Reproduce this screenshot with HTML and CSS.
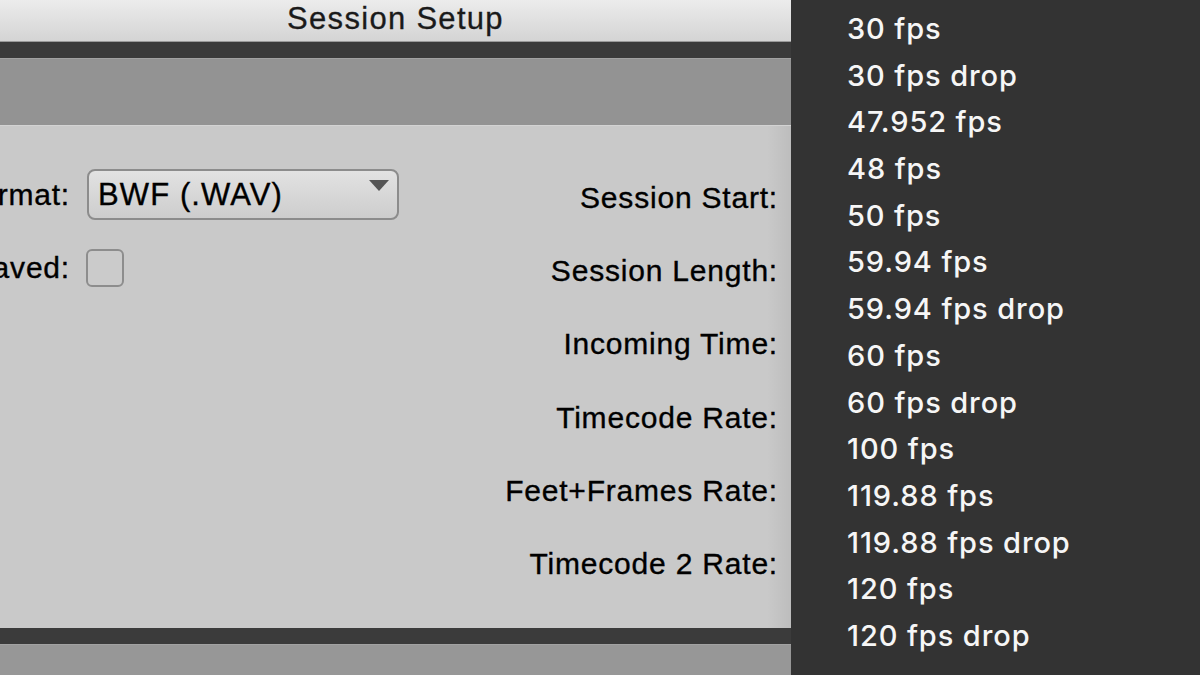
FILE: index.html
```html
<!DOCTYPE html>
<html lang="en">
<head>
<meta charset="UTF-8">
<meta name="viewport" content="width=device-width, initial-scale=1.0">
<title>Session Setup</title>
<link rel="stylesheet" href="styles.css">
</head>
<body>

<div class="screen">
  <!-- ダイアログ本体 -->
  <div class="window">
    <div class="titlebar">Session Setup</div>
    <div class="stripe"></div>
    <div class="band"></div>

    <div class="panel">
      <!-- 左側：フォーマット -->
      <div class="col-left">
        <div class="row">
          <span class="label">Audio File Format:</span>
          <div class="select">
            <span>BWF (.WAV)</span>
            <span class="arrow"></span>
          </div>
        </div>
        <div class="row">
          <span class="label">Interleaved:</span>
          <span class="checkbox"></span>
        </div>
      </div>

      <!-- 右側：タイムコード -->
      <div class="col-right">
        <div class="row">Session Start:</div>
        <div class="row">Session Length:</div>
        <div class="row">Incoming Time:</div>
        <div class="row">Timecode Rate:</div>
        <div class="row">Feet+Frames Rate:</div>
        <div class="row">Timecode 2 Rate:</div>
      </div>
    </div>

    <div class="stripe"></div>
    <div class="band band-bottom"></div>
  </div>

  <!-- ポップアップメニュー -->
  <ul class="menu">
    <li>30 fps</li>
    <li>30 fps drop</li>
    <li>47.952 fps</li>
    <li>48 fps</li>
    <li>50 fps</li>
    <li>59.94 fps</li>
    <li>59.94 fps drop</li>
    <li>60 fps</li>
    <li>60 fps drop</li>
    <li>100 fps</li>
    <li>119.88 fps</li>
    <li>119.88 fps drop</li>
    <li>120 fps</li>
    <li>120 fps drop</li>
  </ul>
</div>

</body>
</html>
```

FILE: styles.css
```css
html, body {
  margin: 0;
  padding: 0;
  height: 100%;
  overflow: hidden;
  background: #333;
}

.screen {
  display: flex;
  height: 675px;
  font-family: "Liberation Sans", Arial, sans-serif;
}

/* ウィンドウ */
.window {
  width: 791px;
  display: flex;
  flex-direction: column;
  flex-shrink: 0;
}

.titlebar {
  height: 42px;
  box-sizing: border-box;
  background: linear-gradient(#ececec, #d4d4d4);
  border-bottom: 1px solid #9a9a9a;
  text-align: center;
  font-size: 31px;
  line-height: 37px;
  letter-spacing: 1.3px;
  color: #1a1a1a;
  -webkit-text-stroke: 0.3px #1a1a1a;
  padding-left: 0;
}

.stripe {
  height: 16px;
  background: #3b3b3b;
}

.band {
  height: 67px;
  background: #939393;
  border-top: 1px solid #a2a2a2;
  box-sizing: border-box;
}

.band-bottom {
  flex: 1;
  background: #979797;
}

/* 設定パネル */
.panel {
  height: 503px;
  background: linear-gradient(90deg, #c9c9c9 0, #c9c9c9 97%, #bdbdbd 100%);
  border-top: 1px solid #d3d3d3;
  box-sizing: border-box;
  display: flex;
  justify-content: space-between;
  padding: 35px 13px 0 0;
  color: #000;
  font-size: 30px;
  letter-spacing: 0.8px;
  -webkit-text-stroke: 0.35px #000;
}

.col-left .row {
  height: 73.3px;
  display: flex;
  align-items: center;
  gap: 17px;
}

.col-left .row:first-child {
  margin-top: -3px;
}

.label {
  width: 70px;
  display: flex;
  justify-content: flex-end;
  white-space: nowrap;
}

.select {
  width: 312px;
  height: 51px;
  box-sizing: border-box;
  border: 2px solid #8c8c8c;
  border-radius: 8px;
  background: linear-gradient(#e2e2e2, #cdcdcd);
  display: flex;
  align-items: center;
  justify-content: space-between;
  padding: 0 8px 0 9px;
  font-size: 31px;
  letter-spacing: 1.1px;
}

.arrow {
  align-self: flex-start;
  margin-top: 9px;
  width: 0;
  height: 0;
  border-left: 10px solid transparent;
  border-right: 10px solid transparent;
  border-top: 11px solid #555;
}

.checkbox {
  width: 38px;
  height: 38px;
  box-sizing: border-box;
  border: 2px solid #8d8d8d;
  border-radius: 6px;
  background: #cbcbcb;
  margin-left: -1px;
}

.col-right {
  display: flex;
  flex-direction: column;
  align-items: flex-end;
}

.col-right .row {
  height: 73.3px;
  display: flex;
  align-items: center;
  white-space: nowrap;
}

/* メニュー */
.menu {
  flex: 1;
  list-style: none;
  margin: 0;
  padding: 6px 0 0 56px;
  background: #333;
  color: #f6f6f6;
  font-family: Inter, "Noto Sans", sans-serif;
  font-size: 29px;
  font-weight: 500;
  letter-spacing: 0.9px;
}

.menu li {
  height: 46.7px;
  line-height: 46.7px;
  white-space: nowrap;
}
```
